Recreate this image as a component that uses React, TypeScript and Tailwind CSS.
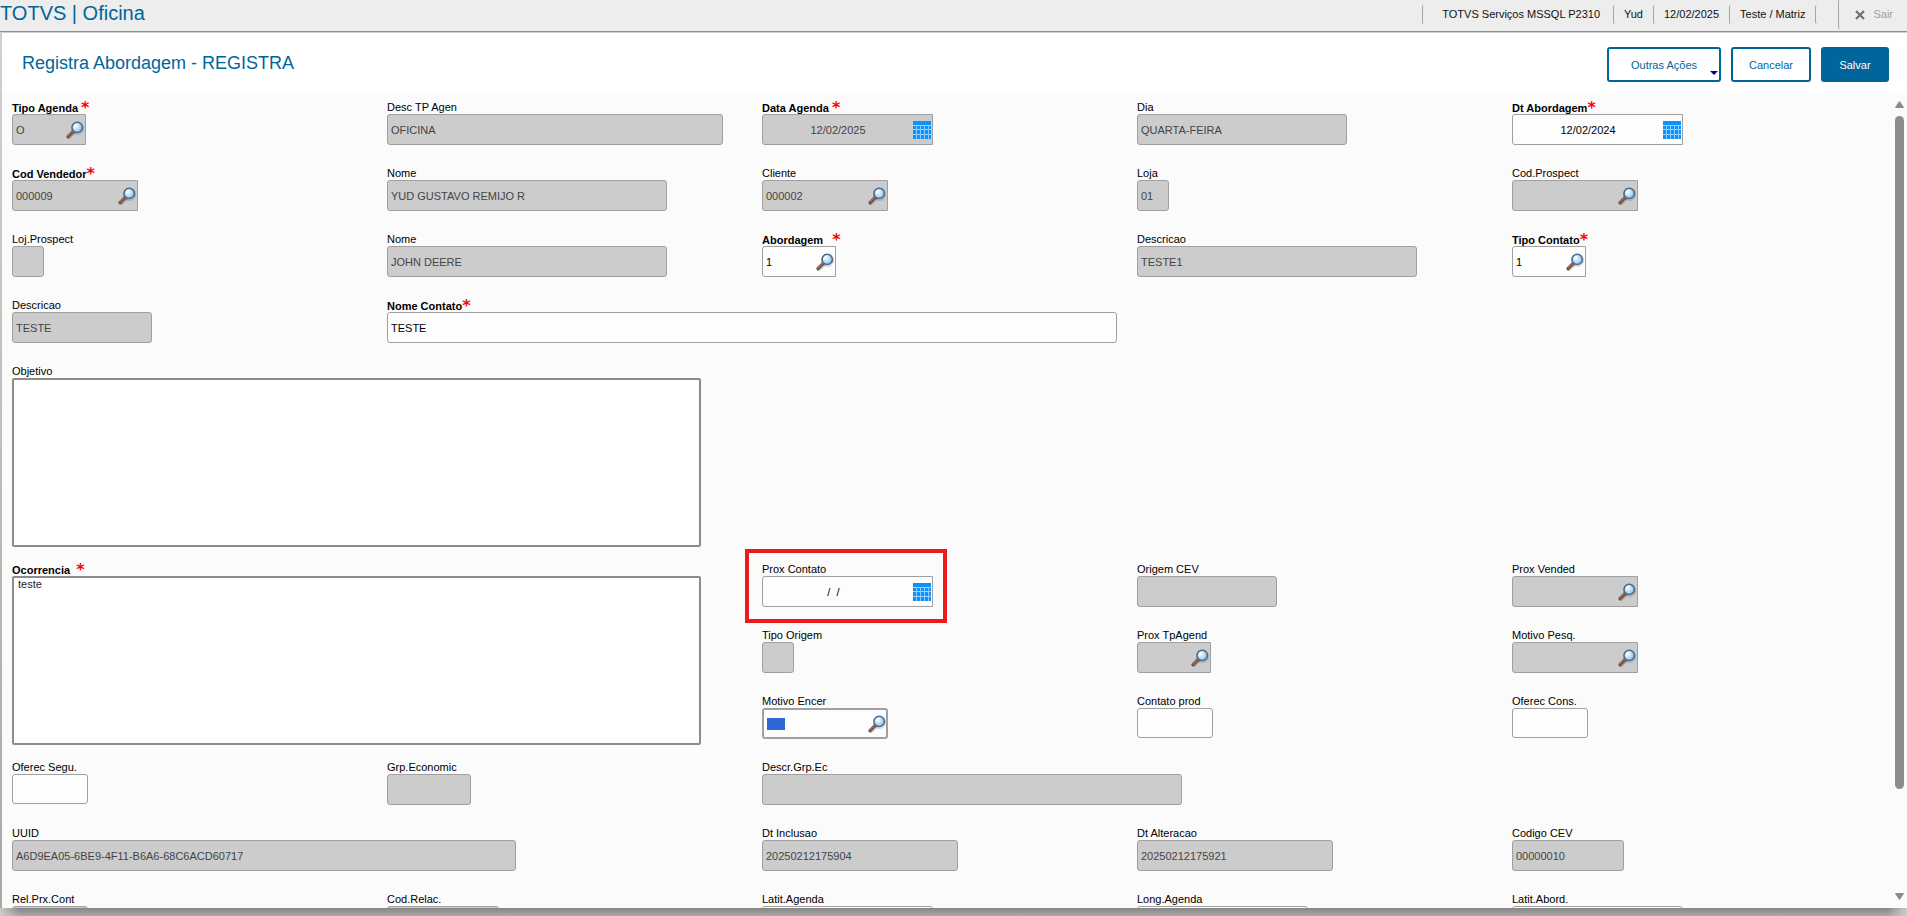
import clsx from "clsx";
import { useState } from "react";

type Picker = "search" | "date";

interface Field {
	id: string;
	label: string;
	width: string;
	value?: string;
	required?: boolean;
	editable?: boolean;
	picker?: Picker;
	multiline?: boolean;
	combo?: boolean;
	active?: boolean;
	highlight?: boolean;
	// grid placement
	cell?: string;
}

const W = {
	xs: "w-[32px]",
	code: "w-[74px]",
	combo: "w-[76px]",
	group: "w-[84px]",
	number: "w-[112px]",
	lookup: "w-[126px]",
	short: "w-[140px]",
	date: "w-[171px]",
	stamp: "w-[196px]",
	day: "w-[210px]",
	name: "w-[280px]",
	desc: "w-[336px]",
	long: "w-[420px]",
	uuid: "w-[504px]",
	memo: "w-[689px]",
	full: "w-[730px]",
};

const FIELDS: Field[] = [
	{ id: "tipoAgenda", label: "Tipo Agenda", width: W.code, value: "O", required: true, picker: "search" },
	{ id: "descAgenda", label: "Desc TP Agen", width: W.desc, value: "OFICINA" },
	{ id: "dataAgenda", label: "Data Agenda", width: W.date, value: "12/02/2025", required: true, picker: "date" },
	{ id: "dia", label: "Dia", width: W.day, value: "QUARTA-FEIRA" },
	{ id: "dtAbordagem", label: "Dt Abordagem", width: W.date, value: "12/02/2024", required: true, editable: true, picker: "date" },

	{ id: "codVendedor", label: "Cod Vendedor", width: W.lookup, value: "000009", required: true, picker: "search" },
	{ id: "nomeVendedor", label: "Nome", width: W.name, value: "YUD GUSTAVO REMIJO R" },
	{ id: "cliente", label: "Cliente", width: W.lookup, value: "000002", picker: "search" },
	{ id: "loja", label: "Loja", width: W.xs, value: "01" },
	{ id: "codProspect", label: "Cod.Prospect", width: W.lookup, picker: "search" },

	{ id: "lojProspect", label: "Loj.Prospect", width: W.xs },
	{ id: "nomeCliente", label: "Nome", width: W.name, value: "JOHN DEERE" },
	{ id: "abordagem", label: "Abordagem", width: W.code, value: "1", required: true, editable: true, picker: "search" },
	{ id: "descAbordagem", label: "Descricao", width: W.name, value: "TESTE1" },
	{ id: "tipoContato", label: "Tipo Contato", width: W.code, value: "1", required: true, editable: true, picker: "search" },

	{ id: "descContato", label: "Descricao", width: W.short, value: "TESTE" },
	{ id: "nomeContato", label: "Nome Contato", width: W.full, value: "TESTE", required: true, editable: true, cell: "col-span-4" },

	{ id: "objetivo", label: "Objetivo", width: W.memo, multiline: true, editable: true, cell: "col-span-5" },

	{ id: "ocorrencia", label: "Ocorrencia", width: W.memo, value: "teste", required: true, multiline: true, editable: true, cell: "col-span-2 row-span-3" },
	{ id: "proxContato", label: "Prox Contato", width: W.date, value: "/  /   ", editable: true, picker: "date", highlight: true },
	{ id: "origemCev", label: "Origem CEV", width: W.short },
	{ id: "proxVended", label: "Prox Vended", width: W.lookup, picker: "search" },
	{ id: "tipoOrigem", label: "Tipo Origem", width: W.xs },
	{ id: "proxTpAgend", label: "Prox TpAgend", width: W.code, picker: "search" },
	{ id: "motivoPesq", label: "Motivo Pesq.", width: W.lookup, picker: "search" },
	{ id: "motivoEncer", label: "Motivo Encer", width: W.lookup, editable: true, picker: "search", active: true },
	{ id: "contatoProd", label: "Contato prod", width: W.combo, editable: true, combo: true },
	{ id: "oferecCons", label: "Oferec Cons.", width: W.combo, editable: true, combo: true },

	{ id: "oferecSegu", label: "Oferec Segu.", width: W.combo, editable: true, combo: true },
	{ id: "grpEconomic", label: "Grp.Economic", width: W.group },
	{ id: "descrGrpEc", label: "Descr.Grp.Ec", width: W.long, cell: "col-span-3" },

	{ id: "uuid", label: "UUID", width: W.uuid, value: "A6D9EA05-6BE9-4F11-B6A6-68C6ACD60717", cell: "col-span-2" },
	{ id: "dtInclusao", label: "Dt Inclusao", width: W.stamp, value: "20250212175904" },
	{ id: "dtAlteracao", label: "Dt Alteracao", width: W.stamp, value: "20250212175921" },
	{ id: "codigoCev", label: "Codigo CEV", width: W.number, value: "00000010" },

	{ id: "relPrxCont", label: "Rel.Prx.Cont", width: W.combo },
	{ id: "codRelac", label: "Cod.Relac.", width: W.number },
	{ id: "latitAgenda", label: "Latit.Agenda", width: W.date, editable: true },
	{ id: "longAgenda", label: "Long.Agenda", width: W.date, editable: true },
	{ id: "latitAbord", label: "Latit.Abord.", width: W.date, editable: true },
];

const SESSION = ["TOTVS Serviços MSSQL P2310", "Yud", "12/02/2025", "Teste / Matriz"];

function MagnifierIcon() {
	return (
		<svg width="18" height="18" viewBox="0 0 18 18" aria-hidden="true">
			<defs>
				<radialGradient id="lens" cx="0.4" cy="0.4" r="0.65">
					<stop offset="0" stopColor="#f4fbff" />
					<stop offset="0.55" stopColor="#b5dbf5" />
					<stop offset="1" stopColor="#7fb8e6" />
				</radialGradient>
			</defs>
			<path d="M2.6 17 8.6 11.4" stroke="#000" strokeOpacity="0.2" strokeWidth="3" strokeLinecap="round" />
			<circle cx="11.6" cy="7.4" r="5.8" fill="none" stroke="#000" strokeOpacity="0.15" strokeWidth="1.6" />
			<path d="M2 15.6 7.4 10.2" stroke="#6b4a3d" strokeWidth="3.2" strokeLinecap="round" />
			<path d="M2 15 6.8 10.2" stroke="#a9775c" strokeWidth="1.2" strokeLinecap="round" />
			<circle cx="11.2" cy="6.4" r="5.2" fill="url(#lens)" stroke="#4a6a8c" strokeWidth="1.5" />
			<path d="M8.2 6.2a3.2 3.2 0 0 1 3.4-2.8" fill="none" stroke="#fff" strokeWidth="1.2" />
		</svg>
	);
}

function CalendarIcon() {
	return (
		<svg width="18" height="18" viewBox="0 0 18 18" aria-hidden="true">
			<rect width="18" height="18" fill="#0a93ff" />
			<path d="M0 4.5H18M0 8.5H18M0 13.5H18" stroke="#a3d6ff" />
			<path d="M3.5 4V18M7.5 4V18M11.5 4V18M15.5 4V18" stroke="#8ccbff" />
		</svg>
	);
}

function FieldCell({ field }: { field: Field }) {
	const [value, setValue] = useState(field.value ?? "");

	return (
		<div className={clsx("relative flex flex-col items-start", field.cell)}>
			<label
				htmlFor={field.id}
				className={clsx(
					"flex h-[14px] items-center whitespace-pre text-[11px] leading-[14px] text-black",
					field.required && "pt-0.5 font-bold",
				)}
			>
				{field.required ? (
					<>
						{field.label.padEnd(12)}
						<span className="font-['DejaVu_Sans',sans-serif] text-[#ff0000] text-[16px]">*</span>
					</>
				) : (
					field.label
				)}
			</label>

			{field.multiline ? (
				<textarea
					id={field.id}
					value={value}
					onChange={(e) => setValue(e.target.value)}
					className={clsx(
						"mb-[15px] block h-[169px] resize-none rounded-xs border-2 border-[#8c8c8c] bg-white px-1 text-[11px] leading-[13px] text-[#222] outline-none",
						field.width,
					)}
				/>
			) : (
				<div
					className={clsx(
						"flex items-center border-[#a0a0a0]",
						field.width,
						field.combo ? "mb-[22px] h-[30px]" : "mb-[21px] h-[31px]",
						field.active ? "border-2" : "border",
						field.picker && !field.active ? "rounded-l-[3px] pr-px" : "rounded-[3px]",
						field.editable ? "bg-[#fdfdfd] text-black" : "bg-[#cccccc] text-[#444]",
					)}
				>
					{field.active && <span className="ml-[3px] h-3 w-[18px] shrink-0 bg-[#2f66d5]" />}
					<input
						id={field.id}
						type="text"
						value={value}
						readOnly={!field.editable}
						onChange={(e) => setValue(e.target.value)}
						className={clsx(
							"h-full w-full min-w-0 bg-transparent px-[3px] text-[11px] outline-none",
							field.picker === "date" && "whitespace-pre text-center",
						)}
					/>
					{field.picker && (
						<button
							type="button"
							aria-label={field.picker === "date" ? "Abrir calendário" : "Pesquisar"}
							className="shrink-0"
						>
							{field.picker === "date" ? <CalendarIcon /> : <MagnifierIcon />}
						</button>
					)}
				</div>
			)}

			{field.highlight && (
				<div className="pointer-events-none absolute -top-[13px] -left-[17px] h-[74px] w-[202px] border-4 border-[#e81c1f]" />
			)}
		</div>
	);
}

function TopBar() {
	return (
		<header className="flex h-[32px] shrink-0 items-start justify-between border-[#909090] border-b bg-[#ededed]">
			<h1 className="text-[20px] text-[#00659a] leading-[26px]">TOTVS | Oficina</h1>
			<div className="flex h-[29px] items-start text-[11px] text-[#111]">
				<div className="mt-[5px] flex h-[19px] items-center">
					{SESSION.map((item, i) => (
						<span
							key={item}
							className={clsx(
								"flex h-full items-center rounded-l-xs border-[#a5a5a5] border-l",
								i === 0 ? "pr-[13px] pl-[19px]" : "px-[10px]",
							)}
						>
							{item}
						</span>
					))}
					<span className="h-full w-[23px] rounded-l-xs border-[#a5a5a5] border-l" />
				</div>
				<button
					type="button"
					className="flex h-full items-center gap-2 rounded-l-xs border-[#a5a5a5] border-l pr-[14px] pl-4 text-[#a0a0a0]"
				>
					<svg width="10" height="10" viewBox="0 0 10 10" aria-hidden="true">
						<path d="M1 1 9 9M9 1 1 9" stroke="#6b7076" strokeWidth="2.2" />
					</svg>
					Sair
				</button>
			</div>
		</header>
	);
}

function ActionBar() {
	return (
		<div className="flex h-[60px] shrink-0 items-center justify-between bg-white pr-[18px] pl-5">
			<h2 className="text-[#00659a] text-[18px]">Registra Abordagem - REGISTRA</h2>
			<div className="flex gap-[10px] pt-[3px] text-[11px]">
				<button
					type="button"
					className="relative h-[35px] w-[114px] rounded-[3px] border-2 border-[#00659a] bg-white pt-0.5 text-[#00659a]"
				>
					Outras Ações
					<span className="absolute right-px bottom-[5px] border-x-4 border-x-transparent border-t-4 border-t-[#0000a0]" />
				</button>
				<button
					type="button"
					className="h-[35px] w-[80px] rounded-[3px] border-2 border-[#00659a] bg-white pt-0.5 text-[#00659a]"
				>
					Cancelar
				</button>
				<button type="button" className="h-[35px] w-[68px] rounded-[3px] bg-[#00659a] pt-0.5 text-white">
					Salvar
				</button>
			</div>
		</div>
	);
}

function ScrollTrack() {
	return (
		<div className="flex w-5 shrink-0 flex-col items-center pt-[8px] pr-[3px] pb-[8px] pl-2">
			<svg width="9" height="7" viewBox="0 0 9 7" aria-hidden="true">
				<path d="M4.5 0.5 8.5 6.5H0.5Z" fill="#8b8b8b" stroke="#8b8b8b" strokeLinejoin="round" />
			</svg>
			<div className="my-2 w-full flex-1">
				<div className="h-7/8 rounded-full bg-[#8b8b8b]" />
			</div>
			<svg width="9" height="7" viewBox="0 0 9 7" aria-hidden="true">
				<path d="M0.5 0.5H8.5L4.5 6.5Z" fill="#8b8b8b" stroke="#8b8b8b" strokeLinejoin="round" />
			</svg>
		</div>
	);
}

export default function App() {
	return (
		<div className="flex h-screen flex-col overflow-hidden bg-[#ededed] font-['Liberation_Sans',Arial,sans-serif]">
			<TopBar />
			<div className="flex min-h-0 flex-1 flex-col bg-linear-to-b from-[#d0d0d0] to-[#a8a8a8] pt-px pl-0.5">
				<ActionBar />
				<main className="flex min-h-0 flex-1 bg-[#fbfbfb]">
					<div className="min-w-0 flex-1 overflow-hidden">
						<form className="grid grid-cols-5 pt-[7px] pl-[10px]" onSubmit={(e) => e.preventDefault()}>
							{FIELDS.map((field) => (
								<FieldCell key={field.id} field={field} />
							))}
						</form>
					</div>
					<ScrollTrack />
				</main>
			</div>
			{/* window shadow, lighter towards both corners */}
			<div className="flex h-2 shrink-0 bg-linear-to-b from-[#858585] to-[#aaaaaa]">
				<div className="w-5 bg-linear-to-r from-[#cccccc] to-transparent" />
				<div className="flex-1" />
				<div className="w-5 bg-linear-to-l from-[#cccccc] to-transparent" />
			</div>
		</div>
	);
}
